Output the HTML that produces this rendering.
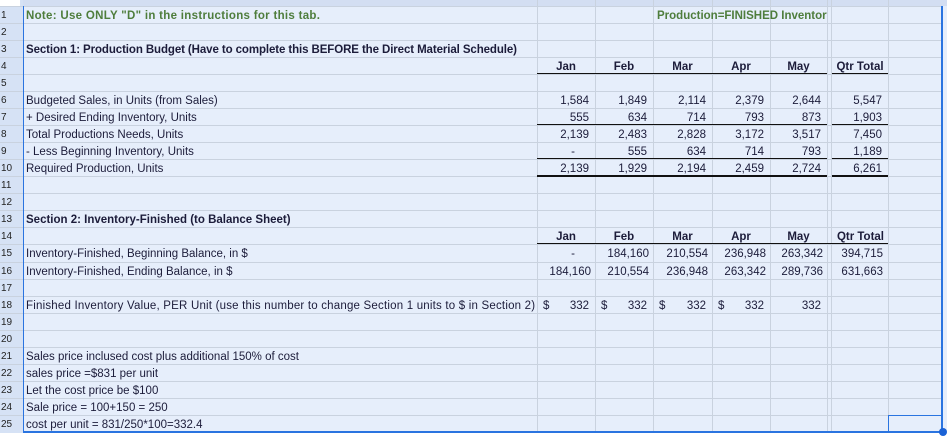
<!DOCTYPE html>
<html><head><meta charset="utf-8"><style>
*{margin:0;padding:0;box-sizing:border-box}
body{width:947px;height:436px;overflow:hidden;background:#e6eefb;font-family:"Liberation Sans",sans-serif;font-size:11.5px;color:#1c1c3a;position:relative}
.hl{position:absolute;left:0;width:942px;height:1px;background:#c9d2df}
.vl{position:absolute;top:0;width:1px;height:432px;background:#c9d2df}
.t{position:absolute;height:17px;line-height:17px;white-space:nowrap;overflow:visible;margin-top:2px}
.r{text-align:right;padding-right:6px}
.c{text-align:center}
.b{font-weight:bold}
.g{color:#4e7d3c;font-weight:bold}
.rn{position:absolute;left:0;width:23px;font-size:10px;line-height:17px;color:#222;padding-left:1px;margin-top:1px}
.ul{position:absolute;height:1px;background:#111}
</style></head><body>
<div style="position:absolute;left:0;top:0;width:947px;height:6px;background:#d3def2"></div>
<div style="position:absolute;left:0;top:0;width:23px;height:436px;background:#d6e2f5"></div>
<div style="position:absolute;left:0;top:0;width:20px;height:6px;background:#fff"></div>
<div class="hl" style="top:6px"></div><div class="hl" style="top:23px"></div><div class="hl" style="top:40px"></div><div class="hl" style="top:57px"></div><div class="hl" style="top:74px"></div><div class="hl" style="top:91px"></div><div class="hl" style="top:108px"></div><div class="hl" style="top:125px"></div><div class="hl" style="top:142px"></div><div class="hl" style="top:159px"></div><div class="hl" style="top:176px"></div><div class="hl" style="top:193px"></div><div class="hl" style="top:210px"></div><div class="hl" style="top:227px"></div><div class="hl" style="top:244px"></div><div class="hl" style="top:262px"></div><div class="hl" style="top:279px"></div><div class="hl" style="top:296px"></div><div class="hl" style="top:313px"></div><div class="hl" style="top:330px"></div><div class="hl" style="top:347px"></div><div class="hl" style="top:364px"></div><div class="hl" style="top:381px"></div><div class="hl" style="top:398px"></div><div class="hl" style="top:415px"></div>
<div class="vl" style="left:537px"></div><div class="vl" style="left:595px"></div><div class="vl" style="left:653px"></div><div class="vl" style="left:712px"></div><div class="vl" style="left:770px"></div><div class="vl" style="left:827px"></div><div class="vl" style="left:831px"></div><div class="vl" style="left:888px"></div>
<div class="rn" style="top:6px">1</div><div class="rn" style="top:23px">2</div><div class="rn" style="top:40px">3</div><div class="rn" style="top:57px">4</div><div class="rn" style="top:74px">5</div><div class="rn" style="top:91px">6</div><div class="rn" style="top:108px">7</div><div class="rn" style="top:125px">8</div><div class="rn" style="top:142px">9</div><div class="rn" style="top:159px">10</div><div class="rn" style="top:176px">11</div><div class="rn" style="top:193px">12</div><div class="rn" style="top:210px">13</div><div class="rn" style="top:227px">14</div><div class="rn" style="top:244px">15</div><div class="rn" style="top:262px">16</div><div class="rn" style="top:279px">17</div><div class="rn" style="top:296px">18</div><div class="rn" style="top:313px">19</div><div class="rn" style="top:330px">20</div><div class="rn" style="top:347px">21</div><div class="rn" style="top:364px">22</div><div class="rn" style="top:381px">23</div><div class="rn" style="top:398px">24</div><div class="rn" style="top:415px">25</div>
<div class="t g" style="left:26px;top:6px;letter-spacing:0.3px">Note: Use ONLY "D" in the instructions for this tab.</div>
<div class="t g" style="left:657px;top:6px;width:170px;overflow:hidden">Production=FINISHED Inventory</div>
<div class="t b" style="left:26px;top:40px;letter-spacing:-0.1px">Section 1: Production Budget (Have to complete this BEFORE the Direct Material Schedule)</div>
<div class="t b c" style="left:537px;top:57px;width:58px">Jan</div>
<div class="t b c" style="left:595px;top:57px;width:58px">Feb</div>
<div class="t b c" style="left:653px;top:57px;width:59px">Mar</div>
<div class="t b c" style="left:712px;top:57px;width:58px">Apr</div>
<div class="t b c" style="left:770px;top:57px;width:57px">May</div>
<div class="t b c" style="left:832px;top:57px;width:56px">Qtr Total</div>
<div class="ul" style="left:537px;width:290px;top:73px"></div><div class="ul" style="left:832px;width:56px;top:73px"></div>
<div class="t" style="left:26px;top:91px">Budgeted Sales, in Units (from Sales)</div>
<div class="t" style="left:26px;top:108px">+ Desired Ending Inventory, Units</div>
<div class="t" style="left:26px;top:125px">Total Productions Needs, Units</div>
<div class="t" style="left:26px;top:142px">- Less Beginning Inventory, Units</div>
<div class="t" style="left:26px;top:159px">Required Production, Units</div>
<div class="t r" style="left:537px;top:91px;width:58px">1,584</div><div class="t r" style="left:595px;top:91px;width:58px">1,849</div><div class="t r" style="left:653px;top:91px;width:59px">2,114</div><div class="t r" style="left:712px;top:91px;width:58px">2,379</div><div class="t r" style="left:770px;top:91px;width:57px">2,644</div><div class="t r" style="left:832px;top:91px;width:56px">5,547</div>
<div class="t r" style="left:537px;top:108px;width:58px">555</div><div class="t r" style="left:595px;top:108px;width:58px">634</div><div class="t r" style="left:653px;top:108px;width:59px">714</div><div class="t r" style="left:712px;top:108px;width:58px">793</div><div class="t r" style="left:770px;top:108px;width:57px">873</div><div class="t r" style="left:832px;top:108px;width:56px">1,903</div>
<div class="ul" style="left:537px;width:290px;top:124px"></div><div class="ul" style="left:832px;width:56px;top:124px"></div>
<div class="t r" style="left:537px;top:125px;width:58px">2,139</div><div class="t r" style="left:595px;top:125px;width:58px">2,483</div><div class="t r" style="left:653px;top:125px;width:59px">2,828</div><div class="t r" style="left:712px;top:125px;width:58px">3,172</div><div class="t r" style="left:770px;top:125px;width:57px">3,517</div><div class="t r" style="left:832px;top:125px;width:56px">7,450</div>
<div class="t c" style="left:537px;top:142px;width:58px;padding-left:14px">-</div><div class="t r" style="left:595px;top:142px;width:58px">555</div><div class="t r" style="left:653px;top:142px;width:59px">634</div><div class="t r" style="left:712px;top:142px;width:58px">714</div><div class="t r" style="left:770px;top:142px;width:57px">793</div><div class="t r" style="left:832px;top:142px;width:56px">1,189</div>
<div class="ul" style="left:537px;width:290px;top:158px"></div><div class="ul" style="left:832px;width:56px;top:158px"></div>
<div class="t r" style="left:537px;top:159px;width:58px">2,139</div><div class="t r" style="left:595px;top:159px;width:58px">1,929</div><div class="t r" style="left:653px;top:159px;width:59px">2,194</div><div class="t r" style="left:712px;top:159px;width:58px">2,459</div><div class="t r" style="left:770px;top:159px;width:57px">2,724</div><div class="t r" style="left:832px;top:159px;width:56px">6,261</div>
<div class="ul" style="left:537px;width:290px;top:175px;height:2px"></div><div class="ul" style="left:832px;width:56px;top:175px;height:2px"></div>
<div class="t b" style="left:26px;top:210px">Section 2: Inventory-Finished (to Balance Sheet)</div>
<div class="t b c" style="left:537px;top:227px;width:58px">Jan</div>
<div class="t b c" style="left:595px;top:227px;width:58px">Feb</div>
<div class="t b c" style="left:653px;top:227px;width:59px">Mar</div>
<div class="t b c" style="left:712px;top:227px;width:58px">Apr</div>
<div class="t b c" style="left:770px;top:227px;width:57px">May</div>
<div class="t b r" style="left:827px;top:227px;width:61px;padding-right:4px">Qtr Total</div>
<div class="ul" style="left:537px;width:351px;top:243px"></div>
<div class="t" style="left:26px;top:244px">Inventory-Finished, Beginning Balance, in $</div>
<div class="t" style="left:26px;top:262px">Inventory-Finished, Ending Balance, in $</div>
<div class="t c" style="left:537px;top:244px;width:58px;padding-left:14px">-</div><div class="t r" style="left:595px;top:244px;width:58px;padding-right:4px">184,160</div><div class="t r" style="left:653px;top:244px;width:59px;padding-right:4px">210,554</div><div class="t r" style="left:712px;top:244px;width:58px;padding-right:4px">236,948</div><div class="t r" style="left:770px;top:244px;width:57px;padding-right:4px">263,342</div><div class="t r" style="left:827px;top:244px;width:61px;padding-right:5px">394,715</div>
<div class="t r" style="left:537px;top:262px;width:58px;padding-right:4px">184,160</div><div class="t r" style="left:595px;top:262px;width:58px;padding-right:4px">210,554</div><div class="t r" style="left:653px;top:262px;width:59px;padding-right:4px">236,948</div><div class="t r" style="left:712px;top:262px;width:58px;padding-right:4px">263,342</div><div class="t r" style="left:770px;top:262px;width:57px;padding-right:4px">289,736</div><div class="t r" style="left:827px;top:262px;width:61px;padding-right:5px">631,663</div>
<div class="t" style="left:26px;top:296px;letter-spacing:0.2px">Finished Inventory Value, PER Unit (use this number to change Section 1 units to $ in Section 2)</div>
<div class="t" style="left:543px;top:296px">$</div><div class="t r" style="left:537px;top:296px;width:58px">332</div>
<div class="t" style="left:601px;top:296px">$</div><div class="t r" style="left:595px;top:296px;width:58px">332</div>
<div class="t" style="left:659px;top:296px">$</div><div class="t r" style="left:653px;top:296px;width:59px">332</div>
<div class="t" style="left:718px;top:296px">$</div><div class="t r" style="left:712px;top:296px;width:58px">332</div>
<div class="t r" style="left:770px;top:296px;width:57px">332</div>
<div class="t" style="left:26px;top:347px">Sales price inclused cost plus additional 150% of cost</div>
<div class="t" style="left:26px;top:364px">sales price =$831 per unit</div>
<div class="t" style="left:26px;top:381px">Let the cost price be $100</div>
<div class="t" style="left:26px;top:398px">Sale price = 100+150 = 250</div>
<div class="t" style="left:26px;top:415px">cost per unit = 831/250*100=332.4</div>
<div style="position:absolute;left:0;top:433px;width:947px;height:3px;background:#fff"></div>
<div style="position:absolute;left:23px;top:6px;width:1px;height:426px;background:#2a74e0"></div>
<div style="position:absolute;left:941px;top:6px;width:2px;height:426px;background:#2a74e0"></div>
<div style="position:absolute;left:23px;top:431px;width:920px;height:2px;background:#2a74e0"></div>
<div style="position:absolute;left:888px;top:415px;width:54px;height:17px;border:1px solid #2a74e0"></div>
<div style="position:absolute;left:939px;top:428px;width:8px;height:8px;border-radius:50%;background:#1a62d6"></div>
</body></html>
